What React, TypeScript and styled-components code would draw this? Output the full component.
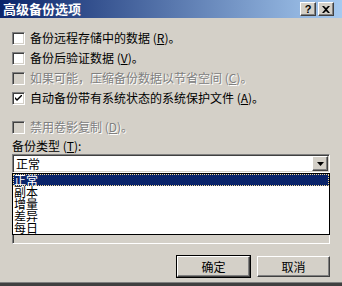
import styled, { createGlobalStyle, css } from 'styled-components';

const GlobalStyle = createGlobalStyle`
  html, body {
    margin: 0;
    padding: 0;
    background: #d4d0c8;
  }
  body {
    font-family: "Noto Sans CJK SC", "Liberation Sans", sans-serif;
    font-size: 12px;
  }
`;

const sunken = css`
  border: 1px solid;
  border-color: #808080 #ffffff #ffffff #808080;
  box-shadow: inset 1px 1px 0 #404040, inset -1px -1px 0 #d4d0c8;
`;

const raised = css`
  border: 1px solid;
  border-color: #ffffff #404040 #404040 #ffffff;
  box-shadow: inset -1px -1px 0 #808080, inset 1px 1px 0 #d4d0c8;
`;

const items = ['正常', '副本', '增量', '差异', '每日'];

const Hot = ({ k }: { k: string }) => <u>{k}</u>;

const CheckMark = () => (
  <svg width="7" height="7" viewBox="0 0 7 7">
    <path d="M0 2 L0 4 L2 6 L7 1 L7 -1 L2 4 Z" fill="#000" />
  </svg>
);

const App = () => {
  const checks = [
    { label: '备份远程存储中的数据', key: 'R', checked: false, disabled: false },
    { label: '备份后验证数据', key: 'V', checked: false, disabled: false },
    { label: '如果可能，压缩备份数据以节省空间', key: 'C', checked: false, disabled: true },
    { label: '自动备份带有系统状态的系统保护文件', key: 'A', checked: true, disabled: false },
  ];

  return (
    <Window>
      <GlobalStyle />
      <TitleBar>
        <Title>高级备份选项</Title>
        <TitleButtons>
          <CapButton>?</CapButton>
          <CapButton>
            <svg width="8" height="7" viewBox="0 0 8 7">
              <path d="M0 0h2l2 2 2-2h2L5 3.5 8 7H6L4 5 2 7H0l3-3.5z" fill="#000" />
            </svg>
          </CapButton>
        </TitleButtons>
      </TitleBar>
      <Body>
        {checks.map((c) => (
          <CheckRow key={c.key} $disabled={c.disabled}>
            <Box $disabled={c.disabled}>{c.checked && <CheckMark />}</Box>
            <span>
              {c.label} (<Hot k={c.key} />)。
            </span>
          </CheckRow>
        ))}
        <CheckRow $disabled $gap>
          <Box $disabled />
          <span>
            禁用卷影复制 (<Hot k="D" />)。
          </span>
        </CheckRow>
        <Label>
          备份类型 (<Hot k="T" />):
        </Label>
        <ComboWrap>
          <Combo>
            <ComboText>正常</ComboText>
            <ArrowBtn>
              <svg width="7" height="4" viewBox="0 0 7 4">
                <path d="M0 0h7L3.5 4z" fill="#000" />
              </svg>
            </ArrowBtn>
          </Combo>
          <Frame />
          <DropList>
            {items.map((it, i) => (
              <Item key={it} $selected={i === 0}>
                {it}
              </Item>
            ))}
          </DropList>
        </ComboWrap>
        <ButtonRow>
          <DefaultWrap>
            <Button>确定</Button>
          </DefaultWrap>
          <Button>取消</Button>
        </ButtonRow>
      </Body>
      <BottomEdge />
    </Window>
  );
};

const Window = styled.div`
  width: 342px;
  height: 286px;
  display: flex;
  flex-direction: column;
  background: #d4d0c8;
  overflow: hidden;
`;

const TitleBar = styled.div`
  height: 18px;
  flex: none;
  display: flex;
  align-items: center;
  justify-content: space-between;
  padding: 0 8px 0 3px;
  background: linear-gradient(to right, #0a246a, #a6caf0);
`;

const Title = styled.div`
  color: #fff;
  font-weight: bold;
  font-size: 13px;
  line-height: 18px;
`;

const TitleButtons = styled.div`
  display: flex;
  gap: 2px;
`;

const CapButton = styled.div`
  ${raised};
  box-sizing: border-box;
  width: 16px;
  height: 14px;
  background: #d4d0c8;
  display: flex;
  align-items: center;
  justify-content: center;
  font: bold 11px "Liberation Sans", sans-serif;
  color: #000;
`;

const Body = styled.div`
  flex: 1;
  display: flex;
  flex-direction: column;
  padding: 10px 12px 0 12px;
`;

const CheckRow = styled.div<{ $disabled?: boolean; $gap?: boolean }>`
  height: 20px;
  display: flex;
  align-items: center;
  gap: 5px;
  margin-top: ${(p) => (p.$gap ? '9px' : '0')};
  color: ${(p) => (p.$disabled ? '#808080' : '#000')};
  text-shadow: ${(p) => (p.$disabled ? '1px 1px 0 #ffffff' : 'none')};
  white-space: nowrap;
  line-height: 14px;
`;

const Box = styled.div<{ $disabled?: boolean }>`
  ${sunken};
  box-sizing: border-box;
  width: 13px;
  height: 13px;
  flex: none;
  background: ${(p) => (p.$disabled ? '#d4d0c8' : '#fff')};
  display: flex;
  align-items: center;
  justify-content: center;
`;

const Label = styled.div`
  margin-top: 2px;
  line-height: 14px;
  height: 14px;
  color: #000;
`;

const ComboWrap = styled.div`
  position: relative;
  margin-top: 1px;
`;

const Combo = styled.div`
  ${sunken};
  box-sizing: border-box;
  height: 19px;
  background: #fff;
  display: flex;
  align-items: center;
  justify-content: space-between;
  padding: 1px;
`;

const ComboText = styled.div`
  padding-left: 2px;
  line-height: 14px;
`;

const ArrowBtn = styled.div`
  ${raised};
  box-sizing: border-box;
  width: 16px;
  height: 15px;
  background: #d4d0c8;
  display: flex;
  align-items: center;
  justify-content: center;
`;

const Frame = styled.div`
  ${sunken};
  box-sizing: border-box;
  height: 70px;
  margin-top: 1px;
  background: #d4d0c8;
`;

const DropList = styled.div`
  position: absolute;
  top: 19px;
  left: 0;
  right: 0;
  border: 1px solid #000;
  background: #fff;
`;

const Item = styled.div<{ $selected?: boolean }>`
  height: 12px;
  line-height: 12px;
  font-size: 12px;
  padding-left: 1px;
  box-sizing: border-box;
  background: ${(p) => (p.$selected ? '#0a246a' : '#fff')};
  color: ${(p) => (p.$selected ? '#fff' : '#000')};
  outline: ${(p) => (p.$selected ? '1px dotted #f5db95' : 'none')};
  outline-offset: -1px;
`;

const ButtonRow = styled.div`
  display: flex;
  justify-content: flex-end;
  align-items: center;
  gap: 6px;
  margin-top: 11px;
`;

const DefaultWrap = styled.div`
  border: 1px solid #000;
  display: flex;
`;

const Button = styled.div`
  ${raised};
  box-sizing: border-box;
  width: 73px;
  height: 21px;
  background: #d4d0c8;
  display: flex;
  align-items: center;
  justify-content: center;
  color: #000;
`;

const BottomEdge = styled.div`
  height: 3px;
  flex: none;
  border-top: 1px solid #808080;
  background: #404040;
`;

export default App;
